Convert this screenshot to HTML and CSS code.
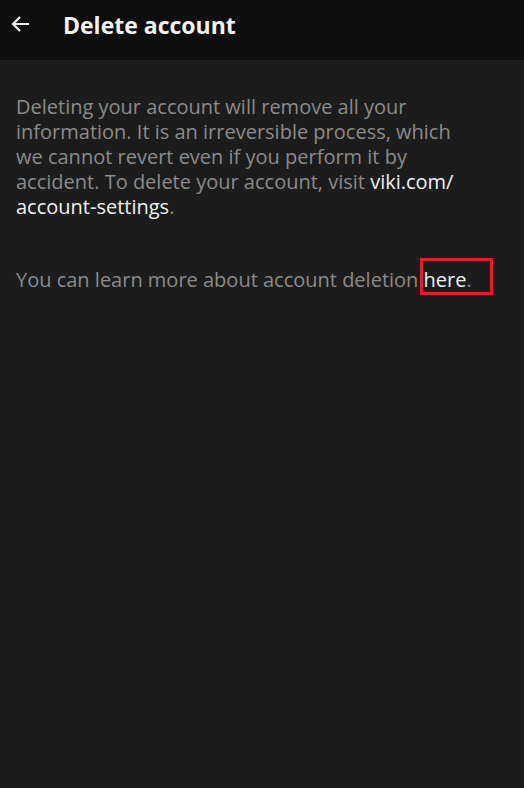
FILE: index.html
```html
<!DOCTYPE html>
<html>
<head>
<meta charset="utf-8">
<link rel="stylesheet" href="styles.css">
</head>
<body>
<header class="appbar">
  <svg class="back" width="24" height="24" viewBox="0 0 24 24"><path d="M20 12H4.5M11 5l-7 7 7 7" fill="none" stroke="#f2f2f2" stroke-width="2.2" stroke-linecap="butt"/></svg>
  <h1 class="title">Delete account</h1>
</header>
<main class="content">
  <p class="para">Deleting your account will remove all your information. It is an irreversible process, which we cannot revert even if you perform it by accident. To delete your account, visit <span class="link">viki.com/<wbr>account&#8209;settings</span>.</p>
  <p class="para">You can learn more about account deletion <span class="link here">here</span>.</p>
</main>
</body>
</html>
```
FILE: styles.css
```css
html, body {
  margin: 0;
  padding: 0;
  background: #1c1c1c;
  height: 100%;
}
body {
  font-family: "Open Sans", "Noto Sans", sans-serif;
}
.appbar {
  height: 60px;
  background: #0e0e0e;
  display: flex;
  align-items: center;
}
.back {
  margin-left: 9px;
  margin-top: -12px;
  width: 24px;
  height: 24px;
}
.title {
  margin: -10px 0 0 30px;
  color: #f4f4f4;
  font-size: 23px;
  font-weight: 700;
}
.content {
  padding: 34px 47px 0 16px;
}
.para {
  margin: 0 0 48px 0;
  color: #8b8b8b;
  font-size: 20px;
  line-height: 25px;
}
.link {
  color: #f2f2f2;
}
.here {
  position: relative;
}
.here::after {
  content: "";
  position: absolute;
  left: -4px;
  top: -8px;
  width: 67px;
  height: 31px;
  border: 3px solid #e31e26;
}
```
